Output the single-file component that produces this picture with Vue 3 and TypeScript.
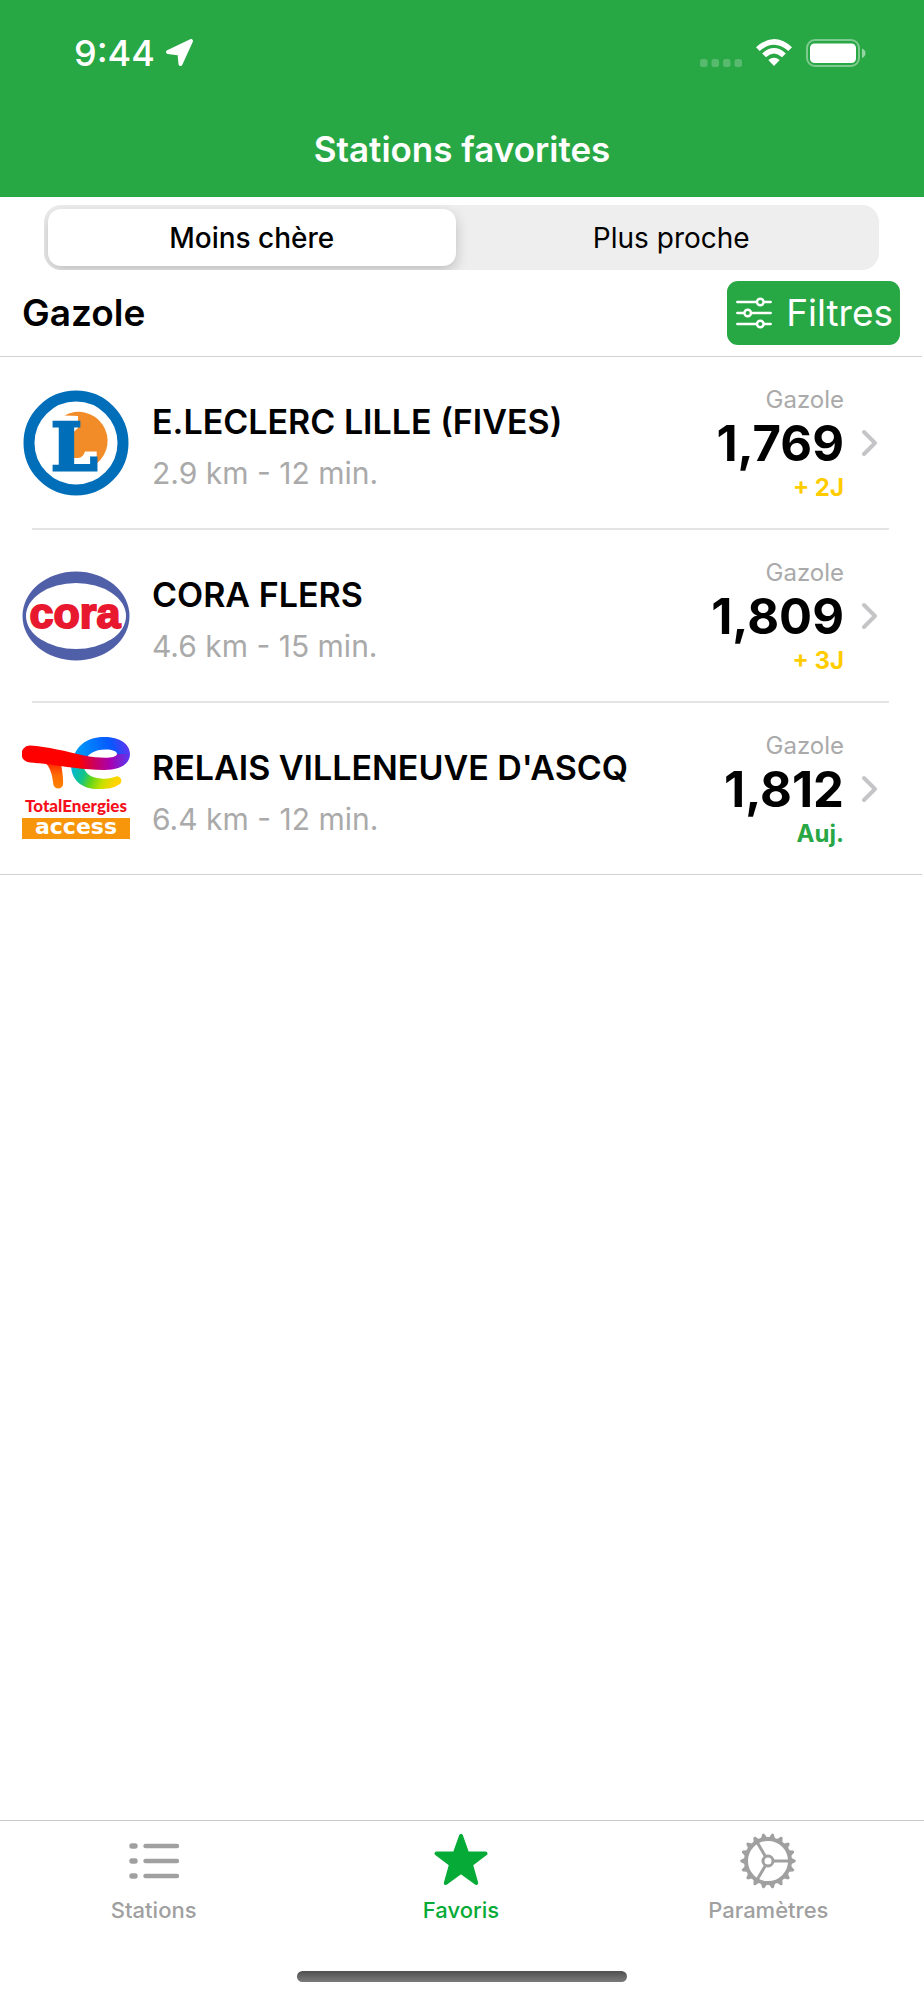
<script setup lang="ts">
import { ref } from 'vue'

type SortKey = 'price' | 'distance'
type Brand = 'leclerc' | 'cora' | 'total'

interface Station {
  brand: Brand
  name: string
  distance: string
  fuel: string
  price: string
  updated: string
  fresh: boolean
}

const sort = ref<SortKey>('price')
const sortOptions: { key: SortKey; label: string }[] = [
  { key: 'price', label: 'Moins chère' },
  { key: 'distance', label: 'Plus proche' },
]

const stations: Station[] = [
  { brand: 'leclerc', name: 'E.LECLERC LILLE (FIVES)', distance: '2.9 km - 12 min.', fuel: 'Gazole', price: '1,769', updated: '+ 2J', fresh: false },
  { brand: 'cora', name: 'CORA FLERS', distance: '4.6 km - 15 min.', fuel: 'Gazole', price: '1,809', updated: '+ 3J', fresh: false },
  { brand: 'total', name: "RELAIS VILLENEUVE D'ASCQ", distance: '6.4 km - 12 min.', fuel: 'Gazole', price: '1,812', updated: 'Auj.', fresh: true },
]

const gearTeeth = Array.from({ length: 18 }, (_, i) => i * 20)
</script>

<template>
  <div class="page">
    <header class="header">
      <div class="status">
        <span class="time">9:44</span>
        <svg class="arrow" width="30" height="30" viewBox="0 0 30 30" aria-hidden="true">
          <path d="M3 14 L26 3 L15.500 26 L14.500 15.500 Z" fill="#fff" stroke="#fff" stroke-width="4" stroke-linejoin="round" />
        </svg>
        <svg class="signal" width="42" height="8" viewBox="0 0 42 8" aria-hidden="true">
          <g fill="#fff" opacity="0.22">
            <rect x="0" width="7.500" height="8" rx="2.500" /><rect x="11.500" width="7.500" height="8" rx="2.500" />
            <rect x="23" width="7.500" height="8" rx="2.500" /><rect x="34.500" width="7.500" height="8" rx="2.500" />
          </g>
        </svg>
        <svg class="wifi" width="36" height="28" viewBox="0 0 36 28" aria-hidden="true">
          <path d="M0 8.200 Q18 -8.200 36 8.200 L32.300 12 Q18 -0.600 3.700 12 Z" fill="#fff" />
          <path d="M6.200 14.400 Q18 3.800 29.800 14.400 L26 18.200 Q18 11 10 18.200 Z" fill="#fff" />
          <path d="M12.300 21 Q18 16.600 23.700 21 L18 27 Z" fill="#fff" />
        </svg>
        <svg class="battery" width="60" height="28" viewBox="0 0 60 28" aria-hidden="true">
          <rect x="1" y="1" width="52" height="26" rx="8" fill="none" stroke="#fff" stroke-opacity="0.4" stroke-width="2" />
          <rect x="4" y="4.500" width="46" height="19.500" rx="4.500" fill="#fff" />
          <path d="M56 9.500 Q59.500 11 59.500 14 Q59.500 17.500 56 19 Z" fill="#fff" opacity="0.5" />
        </svg>
      </div>
      <h1 class="title">Stations favorites</h1>
    </header>

    <main>
      <div class="segments" role="group" aria-label="Tri des stations">
        <button
          v-for="option in sortOptions"
          :key="option.key"
          type="button"
          class="segment"
          :class="{ selected: sort === option.key }"
          :aria-pressed="sort === option.key"
          @click="sort = option.key"
        >
          {{ option.label }}
        </button>
      </div>

      <div class="toolbar">
        <h2 class="fuel-title">Gazole</h2>
        <button type="button" class="filter">
          <svg width="36" height="32" viewBox="0 0 36 32" fill="none" stroke="#fff" stroke-width="2.400" stroke-linecap="round" aria-hidden="true">
            <path d="M1.300 5 H20.500 M28 5 H34.700 M1.300 16 H8 M15.500 16 H34.700 M1.300 27 H20.500 M28 27 H34.700" />
            <circle cx="24.300" cy="5" r="3.300" /><circle cx="11.700" cy="16" r="3.300" /><circle cx="24.300" cy="27" r="3.300" />
          </svg>
          <span>Filtres</span>
        </button>
      </div>

      <ul class="stations">
        <li v-for="station in stations" :key="station.name">
          <a class="station" href="#station">
            <svg v-if="station.brand === 'leclerc'" class="logo" viewBox="0 0 108 108" aria-hidden="true">
              <circle cx="54" cy="54" r="47" fill="#fff" stroke="#006eb8" stroke-width="11" />
              <path d="M42.500 26.500 A29 29 0 0 1 74.700 74.500 V62.500 H63 Q61 69 56 69 H51.500 V43 L56 39 V27 Z" fill="#f28c28" />
              <text x="29" y="81" class="leclerc-letter">L</text>
            </svg>
            <svg v-else-if="station.brand === 'cora'" class="logo" viewBox="0 0 108 108" aria-hidden="true">
              <ellipse cx="54" cy="54" rx="53.500" ry="44.500" fill="#4f5fa8" />
              <ellipse cx="54" cy="54" rx="50" ry="33" fill="#fff" />
              <text x="53" y="66" text-anchor="middle" class="cora-name">cora</text>
            </svg>
            <svg v-else class="logo" viewBox="0 0 108 108" aria-hidden="true">
              <defs>
                <linearGradient id="ribbon-low" gradientUnits="userSpaceOnUse" x1="50" y1="32" x2="92" y2="50">
                  <stop offset="0" stop-color="#00b4dc" /><stop offset="0.300" stop-color="#12c48a" />
                  <stop offset="0.500" stop-color="#62d61a" /><stop offset="0.750" stop-color="#c8e000" /><stop offset="1" stop-color="#ffd400" />
                </linearGradient>
                <linearGradient id="ribbon-top" gradientUnits="userSpaceOnUse" x1="50" y1="28" x2="106" y2="14">
                  <stop offset="0" stop-color="#00a8f0" /><stop offset="0.400" stop-color="#007bff" />
                  <stop offset="0.750" stop-color="#0a55ff" /><stop offset="1" stop-color="#5a38f0" />
                </linearGradient>
                <linearGradient id="ribbon-bar" gradientUnits="userSpaceOnUse" x1="0" y1="26" x2="107" y2="20">
                  <stop offset="0.520" stop-color="#ff0000" /><stop offset="0.640" stop-color="#d4004a" />
                  <stop offset="0.820" stop-color="#a800b0" /><stop offset="1" stop-color="#5a38f0" />
                </linearGradient>
                <linearGradient id="ribbon-foot" x1="0" y1="0" x2="0" y2="1">
                  <stop offset="0" stop-color="#ff1a00" /><stop offset="0.500" stop-color="#ff6a00" /><stop offset="1" stop-color="#ff8200" />
                </linearGradient>
              </defs>
              <path d="M21 26 C28 31 30 38 31.500 50 A5 5 0 0 0 41 50 C41.500 42 40 36 39 28 Z" fill="url(#ribbon-foot)" />
              <path d="M49 26 C48 44 58 54 77 54 C86 54 92 53 96 50 A4 4 0 0 0 94 41.500 C88 43.500 84 44 79 43.500 C68 43 61 38 61.500 27 Z" fill="url(#ribbon-low)" />
              <path d="M49.500 30 C52 12 64 2 82 2 C98 2 108 9 108 19 H95 C95 16 90 14.500 84 14.500 C72 14.500 64 19 61 30 Z" fill="url(#ribbon-top)" />
              <path d="M8 10.500 C25 11.500 45 16.500 62 20.500 C78 23.500 94 24 95 19 L108 19 C108 29 98 35 82 35 C62 35 40 31 28 29.500 C20 28.500 14 28 8 27.500 A8.500 8.500 0 0 1 8 10.500 Z" fill="url(#ribbon-bar)" />
              <text x="54" y="77" text-anchor="middle" class="total-name">TotalEnergies</text>
              <rect y="83" width="108" height="21" fill="#f7960a" />
              <text x="54" y="99" text-anchor="middle" class="access-name">access</text>
            </svg>

            <div class="details">
              <span class="name">{{ station.name }}</span>
              <span class="distance">{{ station.distance }}</span>
            </div>
            <div class="pricing">
              <span class="fuel">{{ station.fuel }}</span>
              <span class="price">{{ station.price }}</span>
              <span class="updated" :class="{ fresh: station.fresh }">{{ station.updated }}</span>
            </div>
            <svg class="chevron" width="18" height="28" viewBox="0 0 18 28" fill="none" aria-hidden="true">
              <path d="M3 3 L14 14 L3 25" stroke="#c5c5c7" stroke-width="4" stroke-linecap="round" stroke-linejoin="round" />
            </svg>
          </a>
          <div class="separator"></div>
        </li>
      </ul>
    </main>

    <footer class="footer">
      <nav class="tabs" aria-label="Navigation principale">
        <a class="tab" href="#stations">
          <svg width="56" height="56" viewBox="0 0 56 56" stroke="currentColor" stroke-linecap="round" aria-hidden="true">
            <path d="M6 13 H9 M6 28 H9 M6 43 H9" stroke-width="5.400" />
            <path d="M19.500 13 H51 M19.500 28 H51 M19.500 43 H51" stroke-width="4.400" />
          </svg>
          <span>Stations</span>
        </a>
        <a class="tab active" href="#favoris" aria-current="page">
          <svg width="56" height="56" viewBox="0 0 56 56" aria-hidden="true">
            <path d="M28 3 L34.200 20.500 L52.500 20.500 L38 31.500 L43.200 50 L28 39 L12.800 50 L18 31.500 L3.500 20.500 L21.800 20.500 Z" fill="currentColor" stroke="currentColor" stroke-width="4" stroke-linejoin="round" />
          </svg>
          <span>Favoris</span>
        </a>
        <a class="tab" href="#parametres">
          <svg width="56" height="56" viewBox="0 0 56 56" fill="none" stroke="currentColor" aria-hidden="true">
            <circle cx="28" cy="28" r="22" stroke-width="4" />
            <circle cx="28" cy="28" r="5" stroke-width="3" />
            <path v-for="angle in [0, 120, 240]" :key="angle" d="M34 28 H50" stroke-width="3" :transform="`rotate(${angle} 28 28)`" />
            <path v-for="angle in gearTeeth" :key="`tooth-${angle}`" d="M51 24.800 L55.200 26.800 Q56.400 28 55.200 29.200 L51 31.200 Z" fill="currentColor" stroke="none" :transform="`rotate(${angle} 28 28)`" />
          </svg>
          <span>Paramètres</span>
        </a>
      </nav>
      <div class="home-bar"></div>
    </footer>
  </div>
</template>

<style>
body {
  margin: 0;
  background: #fff;
}
</style>

<style scoped>
.page {
  display: flex;
  flex-direction: column;
  min-height: 100vh;
  background: #fff;
  color: #000;
  font-family: Inter, "Liberation Sans", sans-serif;
}

.header {
  background: #28a745;
  color: #fff;
}

.status {
  display: flex;
  align-items: center;
  height: 105px;
  padding: 0 58px 0 74px;
}

.time {
  font-size: 36px;
  line-height: 44px;
  font-weight: 500;
}

.arrow {
  margin-left: 10px;
}

.signal {
  margin: 20px 14px 0 auto;
}

.wifi {
  margin-right: 14px;
}

.title {
  margin: 0;
  padding: 22px 0 26px;
  font-size: 35px;
  line-height: 44px;
  font-weight: 600;
  text-align: center;
}

.segments {
  display: grid;
  grid-template-columns: 1fr 1fr;
  gap: 12px;
  height: 57px;
  margin: 8px 45px 0 44px;
  padding: 4px;
  border-radius: 17px;
  background: #eee;
  overflow: hidden;
}

.segment {
  padding: 0;
  border: 0;
  border-radius: 13px;
  background: transparent;
  color: #000;
  font: 400 28px/36px Inter, "Liberation Sans", sans-serif;
}

.segment.selected {
  background: #fff;
  font-weight: 500;
  box-shadow: 0 5px 14px rgba(0, 0, 0, 0.2);
}

.toolbar {
  display: flex;
  align-items: center;
  justify-content: space-between;
  margin-right: 2px;
  padding: 11px 22px 11px 22px;
  border-bottom: 1px solid #d2d2d2;
}

.fuel-title {
  margin: 0;
  font-size: 37px;
  line-height: 44px;
  font-weight: 600;
}

.filter {
  display: flex;
  align-items: center;
  gap: 14px;
  height: 64px;
  padding: 0 7px 0 9px;
  border: 0;
  border-radius: 11px;
  background: #28a745;
  color: #fff;
  font: 400 37px/44px Inter, "Liberation Sans", sans-serif;
}

.stations {
  margin: 0;
  padding: 0;
  list-style: none;
}

.station {
  display: flex;
  align-items: center;
  height: 171px;
  padding: 0 45px 0 22px;
  color: inherit;
  text-decoration: none;
}

.separator {
  height: 2px;
  margin: 0 35px 0 32px;
  background: #e4e4e4;
}

li:last-child .separator {
  height: 1px;
  margin: 0 2px 0 0;
  background: #d2d2d2;
}

.logo {
  flex: none;
  width: 108px;
  height: 108px;
}

.leclerc-letter {
  font: 700 66px "DejaVu Serif", serif;
  fill: #006eb8;
  stroke: #006eb8;
  stroke-width: 3px;
}

.cora-name {
  font: 700 43px "Liberation Sans", sans-serif;
  fill: #e8192f;
  stroke: #e8192f;
  stroke-width: 2px;
}

.total-name {
  font: 900 17px Lato, sans-serif;
  fill: #f5101c;
}

.access-name {
  font: 700 22px "DejaVu Sans", sans-serif;
  fill: #fff;
}

.details {
  display: flex;
  flex: 1;
  flex-direction: column;
  gap: 11px;
  min-width: 0;
  padding: 9px 0 0 22px;
}

.name {
  font-size: 34px;
  line-height: 40px;
  font-weight: 600;
}

.distance {
  color: #aaa;
  font-size: 30px;
  line-height: 40px;
}

.pricing {
  display: flex;
  flex-direction: column;
  align-items: flex-end;
  padding-top: 2px;
  line-height: 44px;
}

.fuel {
  color: #aaa;
  font-size: 24px;
}

.price {
  font-size: 49px;
  font-weight: 700;
}

.updated {
  color: #ffcc00;
  font-size: 24px;
  font-weight: 700;
}

.updated.fresh {
  color: #28a745;
}

.chevron {
  margin-left: 17px;
}

.footer {
  margin-top: auto;
  padding-bottom: 18px;
  border-top: 1px solid #c8c8c8;
}

.tabs {
  display: grid;
  grid-template-columns: repeat(3, 1fr);
  padding: 12px 2px 47px 0;
}

.tab {
  display: flex;
  flex-direction: column;
  align-items: center;
  gap: 7px;
  color: #a0a0a0;
  font-size: 22px;
  line-height: 28px;
  font-weight: 500;
  text-decoration: none;
}

.tab.active {
  color: #05ab36;
}

.home-bar {
  width: 330px;
  height: 11px;
  margin: 0 auto;
  border-radius: 6px;
  background: linear-gradient(#505050, #7a7a7a);
}
</style>
